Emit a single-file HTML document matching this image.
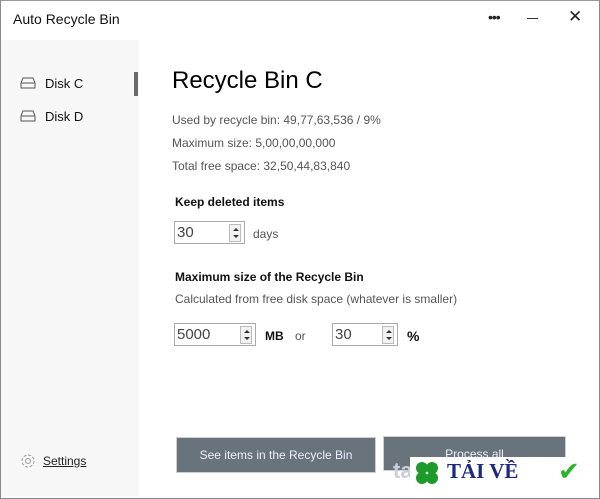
<!DOCTYPE html>
<html><head><meta charset="utf-8"><style>
*{margin:0;padding:0;box-sizing:border-box}
body{width:600px;height:499px;overflow:hidden;background:#fff;font-family:"Liberation Sans","DejaVu Sans",sans-serif;position:relative}
.win{position:absolute;left:0;top:0;width:600px;height:499px;border:1px solid #8a8a8a;border-top-color:#999}
.abs{position:absolute;white-space:nowrap}
.side{position:absolute;left:1px;top:40px;width:138px;height:456px;background:#f7f7f7}
.t{font-size:12px;color:#555}
.b{font-size:12px;font-weight:bold;color:#111}
.spin{position:absolute;border:1px solid #aaa;height:23px;background:#fff}
.spin span{position:absolute;left:2px;top:2px;font-size:15px;color:#444}
.spin i{position:absolute;right:3px;top:2px;width:12px;height:18px;border:1px solid #bbb;background:#f2f2f2}
.spin i:before,.spin i:after{content:"";position:absolute;left:3px;border-left:3px solid transparent;border-right:3px solid transparent}
.spin i:before{top:3px;border-bottom:3px solid #333}
.spin i:after{bottom:3px;border-top:3px solid #333}
.btn{position:absolute;background:#68737b;color:#eef;font-size:12px;text-align:center;border:1px solid #d0d0d0}
</style></head><body>
<div class="win"></div>
<div class="side"></div>
<div class="abs" style="left:13px;top:11px;font-size:14px;color:#111">Auto Recycle Bin</div>
<div class="abs" style="left:488px;top:9px;font-size:14px;color:#222;letter-spacing:-1px">•••</div>
<div class="abs" style="left:527px;top:18px;width:11px;height:1px;background:#333"></div>
<div class="abs" style="left:568px;top:7px;font-size:17px;color:#222">✕</div>
<svg class="abs" style="left:20px;top:77px" width="16" height="12"><path d="M3 1h10l2 5v5H1V6z M1 6h14" fill="none" stroke="#555"/></svg>
<div class="abs" style="left:45px;top:76px;font-size:13px;color:#111">Disk C</div>
<div class="abs" style="left:134px;top:72px;width:4px;height:24px;background:#6a6a6a"></div>
<svg class="abs" style="left:20px;top:110px" width="16" height="12"><path d="M3 1h10l2 5v5H1V6z M1 6h14" fill="none" stroke="#555"/></svg>
<div class="abs" style="left:45px;top:109px;font-size:13px;color:#111">Disk D</div>
<svg class="abs" style="left:20px;top:453px" width="16" height="16"><circle cx="8" cy="8" r="2.5" fill="none" stroke="#999"/><circle cx="8" cy="8" r="6" fill="none" stroke="#999" stroke-dasharray="3 1.7"/></svg>
<div class="abs" style="left:43px;top:454px;font-size:12px;color:#222;text-decoration:underline">Settings</div>
<div class="abs" style="left:172px;top:67px;font-size:24px;color:#000">Recycle Bin C</div>
<div class="abs t" style="left:172px;top:113px">Used by recycle bin: 49,77,63,536 / 9%</div>
<div class="abs t" style="left:172px;top:136px">Maximum size: 5,00,00,00,000</div>
<div class="abs t" style="left:172px;top:159px">Total free space: 32,50,44,83,840</div>
<div class="abs b" style="left:175px;top:195px">Keep deleted items</div>
<div class="spin" style="left:174px;top:221px;width:71px"><span>30</span><i></i></div>
<div class="abs t" style="left:253px;top:227px">days</div>
<div class="abs b" style="left:175px;top:270px">Maximum size of the Recycle Bin</div>
<div class="abs t" style="left:175px;top:292px">Calculated from free disk space (whatever is smaller)</div>
<div class="spin" style="left:174px;top:323px;width:82px"><span>5000</span><i></i></div>
<div class="abs b" style="left:265px;top:329px">MB</div>
<div class="abs t" style="left:295px;top:329px">or</div>
<div class="spin" style="left:332px;top:323px;width:66px"><span>30</span><i></i></div>
<div class="abs b" style="left:407px;top:328px;font-size:14px">%</div>
<div class="btn" style="left:176px;top:437px;width:200px;height:36px;line-height:34px">See items in the Recycle Bin</div>
<div class="btn" style="left:383px;top:436px;width:183px;height:35px;line-height:34px">Process all</div>
<div class="abs" style="left:393px;top:458px;width:20px;height:30px;font-size:22px;color:#ccd;font-weight:bold">ta</div>
<div class="abs" style="left:410px;top:457px;width:180px;height:35px;background:#fff"></div>
<svg class="abs" style="left:413px;top:459px" width="28" height="30"><g fill="#1d9a2a"><circle cx="9" cy="9" r="6"/><circle cx="19" cy="9" r="6"/><circle cx="9" cy="19" r="6"/><circle cx="19" cy="19" r="6"/></g></svg>
<div class="abs" style="left:447px;top:459px;font-size:21px;font-weight:bold;color:#1d2a7a;font-family:'Liberation Serif',serif">TẢI VỀ</div>
<div class="abs" style="left:558px;top:456px;font-size:26px;color:#2ab52a;font-weight:bold">✔</div>
</body></html>
